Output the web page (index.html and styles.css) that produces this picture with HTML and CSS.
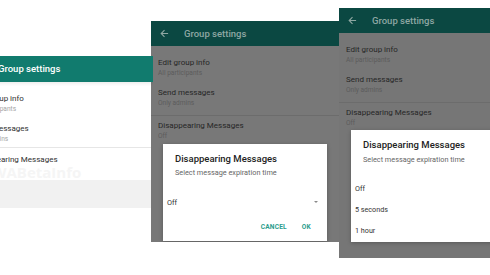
FILE: index.html
```html
<!DOCTYPE html>
<html lang="en">
<head>
<meta charset="utf-8">
<title>Disappearing Messages</title>
<link rel="stylesheet" href="styles.css">
</head>
<body>
<main class="canvas">
  <section class="phone phone-1">
    <header class="bar bar-light">
      <svg class="back" viewBox="0 0 10 10" width="9" height="9"><path d="M9 5H1.5M5 1.3L1.3 5L5 8.7" fill="none" stroke="currentColor" stroke-width="1.3"/></svg>
      <h1 class="title">Group settings</h1>
    </header>
    <div class="body">
      <ul class="list">
        <li class="item"><span class="name">Edit group info</span><span class="sub">All participants</span></li>
        <li class="item item-2"><span class="name">Send messages</span><span class="sub">Only admins</span></li>
        <li class="divider"></li>
        <li class="item item-3"><span class="name">Disappearing Messages</span><span class="sub wm-sub">WABetaInfo</span></li>
      </ul>
    </div>
    <div class="foot"></div>
  </section>

  <section class="phone phone-dim phone-2">
    <header class="bar bar-dim">
      <svg class="back" viewBox="0 0 10 10" width="9" height="9"><path d="M9 5H1.5M5 1.3L1.3 5L5 8.7" fill="none" stroke="currentColor" stroke-width="1.2"/></svg>
      <h1 class="title">Group settings</h1>
    </header>
    <ul class="list">
      <li class="item"><span class="name">Edit group info</span><span class="sub">All participants</span></li>
      <li class="item item-2"><span class="name">Send messages</span><span class="sub">Only admins</span></li>
      <li class="divider"></li>
      <li class="item item-3"><span class="name">Disappearing Messages</span><span class="sub">Off</span></li>
    </ul>
    <div class="dialog dialog-2">
      <h2 class="d-title">Disappearing Messages</h2>
      <p class="d-sub">Select message expiration time</p>
      <div class="select"><span>Off</span><span class="caret"></span></div>
      <div class="actions"><span class="btn">CANCEL</span><span class="btn">OK</span></div>
    </div>
  </section>

  <section class="phone phone-dim phone-3">
    <header class="bar bar-dim">
      <svg class="back" viewBox="0 0 10 10" width="9" height="9"><path d="M9 5H1.5M5 1.3L1.3 5L5 8.7" fill="none" stroke="currentColor" stroke-width="1.2"/></svg>
      <h1 class="title">Group settings</h1>
    </header>
    <ul class="list">
      <li class="item"><span class="name">Edit group info</span><span class="sub">All participants</span></li>
      <li class="item item-2"><span class="name">Send messages</span><span class="sub">Only admins</span></li>
      <li class="divider"></li>
      <li class="item item-3"><span class="name">Disappearing Messages</span><span class="sub">Off</span></li>
    </ul>
    <div class="dialog dialog-3">
      <h2 class="d-title">Disappearing Messages</h2>
      <p class="d-sub">Select message expiration time</p>
      <ul class="options">
        <li>Off</li>
        <li>5 seconds</li>
        <li>1 hour</li>
      </ul>
    </div>
  </section>
</main>
</body>
</html>
```
FILE: styles.css
```css
* { box-sizing: border-box; }
body {
  margin: 0;
  background: #fff;
  font-family: Roboto, "Open Sans", sans-serif;
}
.canvas {
  position: relative;
  width: 490px;
  height: 275px;
  overflow: hidden;
}
.phone {
  position: absolute;
  width: 188px;
  display: flex;
  flex-direction: column;
  overflow: hidden;
}
.phone-1 { left: -35px; top: 56px; height: 152px; background: #fff; }
.phone-2 { left: 151px; top: 21px; height: 221px; background: #787878; }
.phone-3 { left: 339px; top: 8px; height: 250px; background: #767676; }

.bar {
  flex: none;
  height: 25px;
  display: flex;
  align-items: center;
  padding-left: 9px;
  gap: 15px;
}
.bar-light { height: 26px; background: #117b6e; color: #fff; position: relative; z-index: 1; box-shadow: 0 2px 3px rgba(0,0,0,0.07); }
.bar-dim { background: #0b4842; color: #8ea7a2; }
.back { flex: none; }
.title {
  margin: 0;
  font-size: 9.5px;
  font-weight: 500;
  line-height: 12px;
}

.body { height: 98px; background: #fff; flex: none; }
.foot { height: 28px; background: #f1f1f1; flex: none; }

.list {
  list-style: none;
  margin: 0;
  padding: 12px 0 0;
}
.item {
  display: flex;
  flex-direction: column;
  height: 30px;
  padding-left: 7px;
}
.item-2 { height: 27px; }
.item-3 { padding-top: 5px; }
.phone-1 .item-2 { height: 23px; }
.phone-1 .item-3 { padding-top: 7px; }
.name { font-size: 8px; line-height: 10px; color: #2f2f2f; }
.sub { font-size: 6.6px; line-height: 10px; color: #a5a5a5; }
.wm-sub {
  font-family: "Open Sans", sans-serif;
  font-weight: 700;
  font-size: 15px;
  line-height: 14px;
  color: #f5f5f5;
  padding-left: 20px;
}
.divider { height: 1px; background: #e6e6e6; }
.phone-dim .name { color: #262626; }
.phone-dim .sub { color: #5c5c5c; }
.phone-dim .divider { background: #6c6c6c; }

.dialog {
  position: absolute;
  left: 12px;
  width: 164px;
  background: #fff;
  box-shadow: 0 1px 4px rgba(0,0,0,0.25);
  padding-top: 9px;
}
.dialog-2 { top: 123px; height: 97px; }
.dialog-3 { top: 122px; height: 112px; }
.d-title {
  margin: 0;
  padding-left: 12px;
  font-size: 9.5px;
  font-weight: 500;
  line-height: 12px;
  color: #222;
}
.d-sub {
  margin: 3px 0 0;
  padding-left: 12px;
  font-size: 7.3px;
  line-height: 10px;
  color: #666;
}
.dialog-3 .d-sub { margin-top: 4px; }
.select {
  margin-top: 18px;
  display: flex;
  align-items: center;
  justify-content: space-between;
  padding: 0 9px 0 4px;
  height: 12px;
  font-size: 7.3px;
  color: #333;
}
.caret {
  width: 0;
  height: 0;
  border-left: 2.5px solid transparent;
  border-right: 2.5px solid transparent;
  border-top: 2.5px solid #8a8a8a;
}
.actions {
  margin-top: 14px;
  display: flex;
  justify-content: flex-end;
  gap: 15px;
  padding-right: 16px;
  line-height: 10px;
}
.btn {
  font-size: 6.6px;
  font-weight: 700;
  color: #2b9c8c;
  letter-spacing: 0.2px;
}
.options {
  list-style: none;
  margin: 13px 0 0;
  padding: 0 0 0 4px;
}
.options li {
  height: 21px;
  line-height: 21px;
  font-size: 7.2px;
  color: #333;
}
```
